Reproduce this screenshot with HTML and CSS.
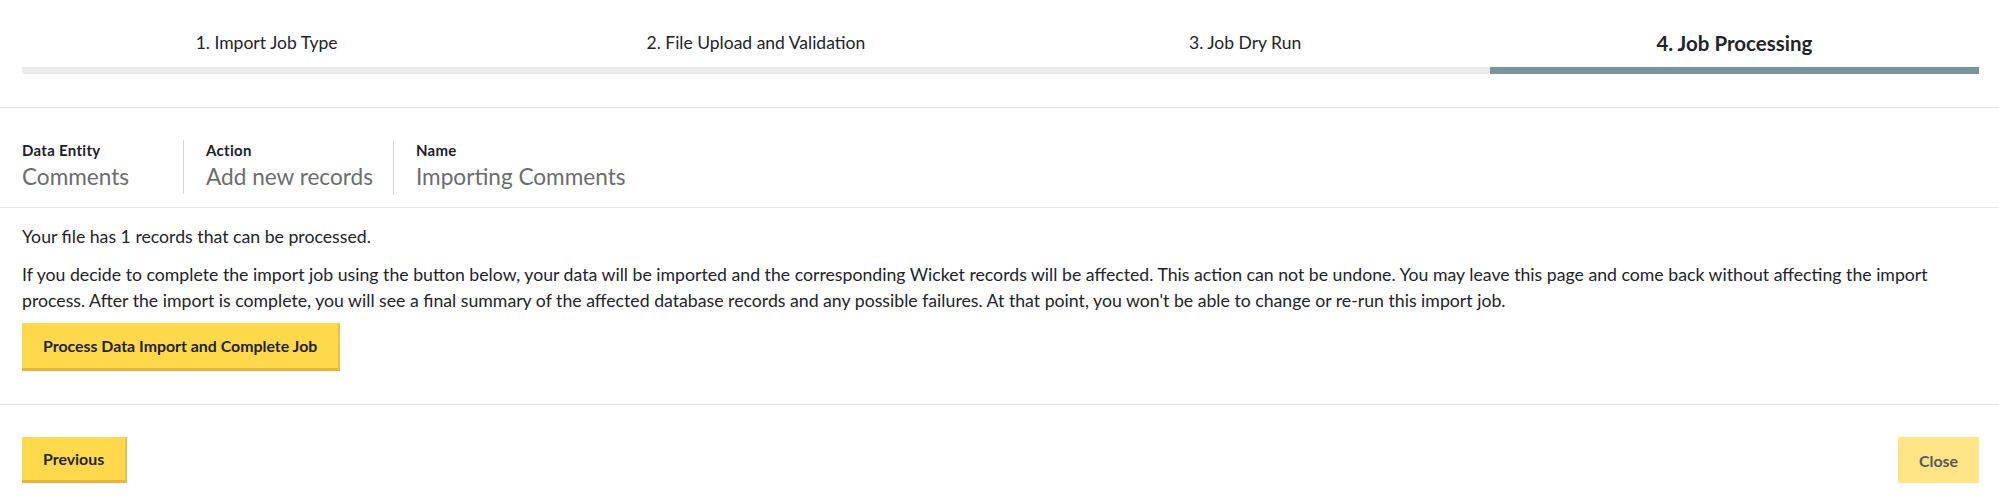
FILE: index.html
```html
<!DOCTYPE html>
<html lang="en">
<head>
<meta charset="utf-8">
<title>Import Job - Job Processing</title>
<link rel="stylesheet" href="styles.css">
</head>
<body>
<div class="wizard">
  <div class="steps">
    <div class="step">
      <div class="step-label">1. Import Job Type</div>
      <div class="step-bar"></div>
    </div>
    <div class="step">
      <div class="step-label">2. File Upload and Validation</div>
      <div class="step-bar"></div>
    </div>
    <div class="step">
      <div class="step-label">3. Job Dry Run</div>
      <div class="step-bar"></div>
    </div>
    <div class="step step-active">
      <div class="step-label">4. Job Processing</div>
      <div class="step-bar"></div>
    </div>
  </div>

  <div class="summary">
    <div class="summary-item summary-entity">
      <div class="summary-label">Data Entity</div>
      <div class="summary-value">Comments</div>
    </div>
    <div class="summary-item">
      <div class="summary-label">Action</div>
      <div class="summary-value">Add new records</div>
    </div>
    <div class="summary-item summary-last">
      <div class="summary-label">Name</div>
      <div class="summary-value">Importing Comments</div>
    </div>
  </div>

  <div class="content">
    <p class="lead">Your file has 1 records that can be processed.</p>
    <p class="notice">If you decide to complete the import job using the button below, your data will be imported and the corresponding Wicket records will be affected. This action can not be undone. You may leave this page and come back without affecting the import process. After the import is complete, you will see a final summary of the affected database records and any possible failures. At that point, you won't be able to change or re-run this import job.</p>
    <button class="btn btn-primary" type="button">Process Data Import and Complete Job</button>
  </div>

  <div class="footer">
    <button class="btn btn-primary" type="button">Previous</button>
    <button class="btn btn-disabled" type="button" disabled>Close</button>
  </div>
</div>
</body>
</html>
```

FILE: styles.css
```css
* {
  box-sizing: border-box;
}

html, body {
  margin: 0;
  padding: 0;
  background: #ffffff;
}

body {
  font-family: "Lato", "Open Sans", "Liberation Sans", sans-serif;
  color: #222428;
}

.wizard {
  width: 100%;
}

/* Steps */
.steps {
  display: grid;
  grid-template-columns: repeat(4, 1fr);
  padding: 31px 20px 33px 22px;
  border-bottom: 1px solid #e8e8e8;
}

.step {
  display: flex;
  flex-direction: column;
  align-items: stretch;
}

.step-label {
  height: 24px;
  line-height: 24px;
  text-align: center;
  font-size: 17.5px;
  color: #222428;
  margin-bottom: 12px;
}

.step-bar {
  height: 7px;
  background: #ebebeb;
}

.step-active .step-label {
  font-size: 20.5px;
  font-weight: 700;
}

.step-active .step-bar {
  background: #77969c;
}

/* Summary */
.summary {
  display: flex;
  padding: 32px 22px 13px;
  border-bottom: 1px solid #e8e8e8;
}

.summary-item {
  padding-right: 20px;
  margin-right: 22px;
  border-right: 1px solid #d6d6d6;
}

.summary-entity {
  min-width: 162px;
}

.summary-last {
  border-right: none;
}

.summary-label {
  font-size: 15px;
  font-weight: 700;
  line-height: 20px;
  color: #1d2025;
  letter-spacing: 0.3px;
}

.summary-value {
  font-size: 22.6px;
  line-height: 34px;
  color: #6b6d70;
}

/* Content */
.content {
  padding: 16px 14px 33px 22px;
  border-bottom: 1px solid #e8e8e8;
}

.lead,
.notice {
  margin: 0;
  font-size: 17.7px;
  line-height: 26px;
  color: #222428;
}

.notice {
  margin-top: 12px;
  margin-bottom: 9px;
}

/* Buttons */
.btn {
  font-family: inherit;
  font-size: 15.9px;
  font-weight: 700;
  height: 48px;
  padding: 0 21px;
  border: none;
  border-radius: 0;
  cursor: pointer;
}

.btn-primary {
  background: #ffd84b;
  color: #1f2430;
  border-right: 2px solid #f2bd45;
  border-bottom: 3px solid #efb23c;
}

.btn-disabled {
  background: #ffe585;
  color: #56595f;
  cursor: default;
}

/* Footer */
.footer {
  display: flex;
  justify-content: space-between;
  align-items: center;
  padding: 32px 20px 19px 22px;
}

.footer .btn {
  height: 46px;
}
```
